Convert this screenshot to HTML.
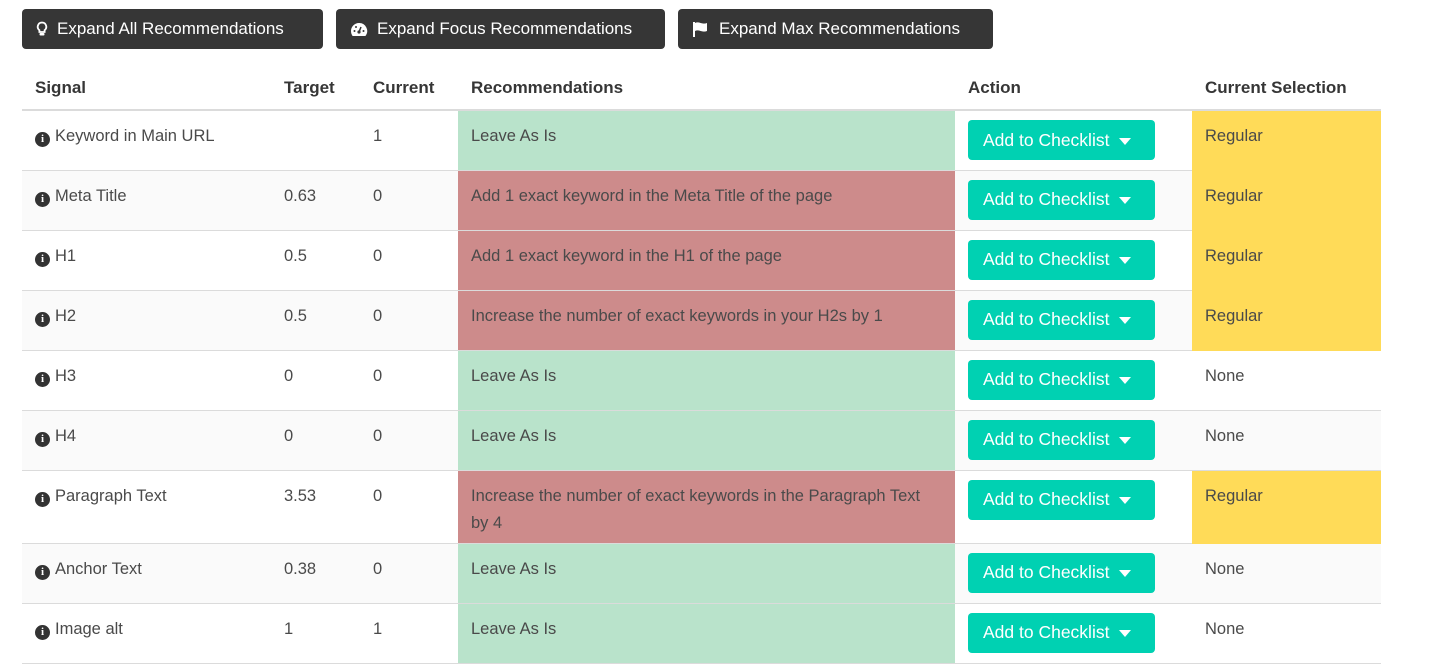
<!DOCTYPE html>
<html><head><meta charset="utf-8"><style>
*{box-sizing:border-box;margin:0;padding:0}
body{width:1452px;height:665px;overflow:hidden;background:#fff;font-family:"Liberation Sans",sans-serif;color:#4a4a4a;font-size:16.5px;position:relative}
.tb{position:absolute;top:9px;height:40px;background:#363636;color:#fff;border-radius:4px;font-size:17px;display:flex;align-items:center;padding-left:14px;gap:9px}
table{position:absolute;left:22px;top:66px;border-collapse:collapse;table-layout:fixed;width:1359px}
th{text-align:left;font-weight:bold;color:#363636;height:44px;padding:0 13px;border-bottom:2px solid #dbdbdb;font-size:17px;vertical-align:middle}
td{padding:12px 13px 0;vertical-align:top;border-bottom:1px solid #dbdbdb;height:60px;line-height:27px}
tr.alt td{background:#fafafa}
td.g{background:#b9e3cb!important}
td.r{background:#cd8b8b!important}
td.y{background:#ffdb58!important;border-bottom-color:#ffdb58}
td.a{padding:9px 13px 0}
.btn{display:inline-flex;align-items:center;background:#00d1b2;color:#fff;border-radius:4px;height:40px;width:187px;padding-left:15px;font-size:17.5px}
.btn:after{content:"";border-left:6px solid transparent;border-right:6px solid transparent;border-top:7px solid #fff;margin-left:10px;margin-top:2px}
.i{display:inline-block;width:15px;height:15px;border-radius:50%;background:#333;color:#fff;font-size:11px;font-weight:bold;text-align:center;line-height:15px;font-family:"Liberation Serif",serif;margin-right:5px;vertical-align:-1px}
</style></head><body>
<div class="tb" style="left:22px;width:301px"><svg width="12" height="16" viewBox="0 0 12 16"><path d="M6 1.5a4.3 4.3 0 0 0-2.6 7.7V11h5.2V9.2A4.3 4.3 0 0 0 6 1.5z" fill="none" stroke="#fff" stroke-width="1.8"/><rect x="3.5" y="12" width="5" height="2.5" rx="1" fill="#fff"/></svg>Expand All Recommendations</div>
<div class="tb" style="left:336px;width:329px"><svg width="18" height="15" viewBox="0 0 18 15"><path d="M9 1a8 8 0 0 0-8 8c0 2 .6 3.6 1.6 5h12.8A8 8 0 0 0 9 1z" fill="#fff"/><circle cx="9" cy="10" r="1.6" fill="#363636"/><path d="M9 10l2-5" stroke="#363636" stroke-width="1.5"/><circle cx="4.5" cy="9" r="1" fill="#363636"/><circle cx="13.5" cy="9" r="1" fill="#363636"/><circle cx="6" cy="5" r="1" fill="#363636"/></svg>Expand Focus Recommendations</div>
<div class="tb" style="left:678px;width:315px"><svg width="18" height="16" viewBox="0 0 18 16"><rect x="1" y="1" width="2" height="15" fill="#fff"/><path d="M3 2c4-2 7 2 12 0v8c-5 2-8-2-12 0z" fill="#fff"/></svg>Expand Max Recommendations</div>
<table>
<colgroup><col style="width:249px"><col style="width:89px"><col style="width:98px"><col style="width:497px"><col style="width:237px"><col style="width:189px"></colgroup>
<tr><th>Signal</th><th>Target</th><th>Current</th><th>Recommendations</th><th>Action</th><th>Current Selection</th></tr>
<tr><td><span class="i">i</span>Keyword in Main URL</td><td></td><td>1</td><td class="g">Leave As Is</td><td class="a"><span class="btn">Add to Checklist</span></td><td class="y">Regular</td></tr>
<tr class="alt"><td><span class="i">i</span>Meta Title</td><td>0.63</td><td>0</td><td class="r">Add 1 exact keyword in the Meta Title of the page</td><td class="a"><span class="btn">Add to Checklist</span></td><td class="y">Regular</td></tr>
<tr><td><span class="i">i</span>H1</td><td>0.5</td><td>0</td><td class="r">Add 1 exact keyword in the H1 of the page</td><td class="a"><span class="btn">Add to Checklist</span></td><td class="y">Regular</td></tr>
<tr class="alt"><td><span class="i">i</span>H2</td><td>0.5</td><td>0</td><td class="r">Increase the number of exact keywords in your H2s by 1</td><td class="a"><span class="btn">Add to Checklist</span></td><td class="y">Regular</td></tr>
<tr><td><span class="i">i</span>H3</td><td>0</td><td>0</td><td class="g">Leave As Is</td><td class="a"><span class="btn">Add to Checklist</span></td><td>None</td></tr>
<tr class="alt"><td><span class="i">i</span>H4</td><td>0</td><td>0</td><td class="g">Leave As Is</td><td class="a"><span class="btn">Add to Checklist</span></td><td>None</td></tr>
<tr><td style="height:73px"><span class="i">i</span>Paragraph Text</td><td>3.53</td><td>0</td><td class="r">Increase the number of exact keywords in the Paragraph Text by 4</td><td class="a"><span class="btn">Add to Checklist</span></td><td class="y">Regular</td></tr>
<tr class="alt"><td><span class="i">i</span>Anchor Text</td><td>0.38</td><td>0</td><td class="g">Leave As Is</td><td class="a"><span class="btn">Add to Checklist</span></td><td>None</td></tr>
<tr><td><span class="i">i</span>Image alt</td><td>1</td><td>1</td><td class="g">Leave As Is</td><td class="a"><span class="btn">Add to Checklist</span></td><td>None</td></tr>
</table>
</body></html>
